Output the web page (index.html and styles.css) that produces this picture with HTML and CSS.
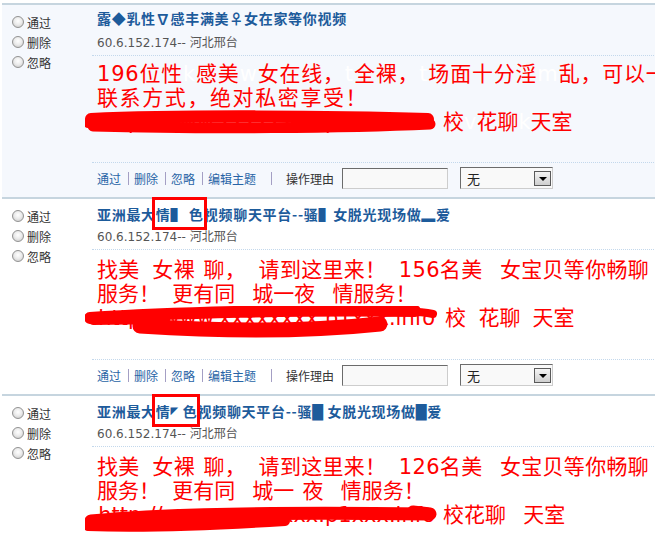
FILE: index.html
```html
<!DOCTYPE html>
<html lang="zh-CN">
<head>
<meta charset="utf-8">
<title>审核帖子</title>
<link rel="stylesheet" href="styles.css">
</head>
<body>
<div class="list">

  <div class="row first">
    <div class="opts">
      <label class="opt"><span class="radio"></span>通过</label>
      <label class="opt"><span class="radio"></span>删除</label>
      <label class="opt"><span class="radio"></span>忽略</label>
    </div>
    <div class="main">
      <div class="title">露◆乳性∇感丰满美♀女在家等你视频</div>
      <div class="ip">60.6.152.174-- 河北邢台</div>
      <div class="msg">
        <p class="ln sp1">196位性<span class="h">k</span>感美<span class="h">w</span>女在线，<span class="h">t</span>全裸，<span class="h">t</span>场面十分淫<span class="h">m</span>乱，可以一</p>
        <p class="ln sp2">联系方式，绝对私密享受！</p>
        <p class="ln"><span class="url"><span class="url-t">http://www.xxxxxxxx.p1xxx.info</span><svg class="scrib" viewBox="0 0 360 32" width="360" height="32"><path d="M6 9 C90 5 250 6 343 9" stroke-width="12"/><path d="M8 16 C120 19 260 18 345 14" stroke-width="11"/><path d="M3 13 L30 12" stroke-width="10"/></svg></span>校<span class="h">v</span>花聊<span class="h">k</span>天室</p>
      </div>
      <div class="acts">
        <a class="lk">通过</a><i class="sep"></i><a class="lk">删除</a><i class="sep"></i><a class="lk">忽略</a><i class="sep"></i><a class="lk">编辑主题</a><i class="sep big"></i><span class="reason">操作理由</span><span class="input"></span><span class="select"><span class="sel-t">无</span><span class="btn"></span></span>
      </div>
    </div>
  </div>

  <div class="row">
    <div class="opts">
      <label class="opt"><span class="radio"></span>通过</label>
      <label class="opt"><span class="radio"></span>删除</label>
      <label class="opt"><span class="radio"></span>忽略</label>
    </div>
    <div class="main">
      <div class="title">亚洲最大<span class="mark">情▌ 色<b class="box"></b></span>视频聊天平台--骚▌女脱光现场做▂爱</div>
      <div class="ip">60.6.152.174-- 河北邢台</div>
      <div class="msg">
        <p class="ln sp3">找美<span class="h">x</span>女裸<span class="h">t</span>聊，<span class="h">k</span>请到这里来！<span class="h">k</span>156名美<span class="h">w</span>女宝贝等你畅聊</p>
        <p class="ln">服务！<span class="h">k</span>更有同<span class="h">w</span>城一夜<span class="h">w</span>情服务！</p>
        <p class="ln"><span class="url u2"><span class="url-t">http://www.xxxxxxxx.p1xxx.info</span><svg class="scrib" viewBox="0 0 360 34" width="360" height="34"><path d="M5 12 C80 7 220 3 330 5" stroke-width="12"/><path d="M55 20 C130 25 220 26 295 18" stroke-width="15"/><path d="M296 7 Q330 4 348 8" stroke-width="8"/><path d="M8 14 L80 13" stroke-width="10"/></svg></span>校<span class="h">v</span>花聊<span class="h">k</span>天室</p>
      </div>
      <div class="acts">
        <a class="lk">通过</a><i class="sep"></i><a class="lk">删除</a><i class="sep"></i><a class="lk">忽略</a><i class="sep"></i><a class="lk">编辑主题</a><i class="sep big"></i><span class="reason">操作理由</span><span class="input"></span><span class="select"><span class="sel-t">无</span><span class="btn"></span></span>
      </div>
    </div>
  </div>

  <div class="row">
    <div class="opts">
      <label class="opt"><span class="radio"></span>通过</label>
      <label class="opt"><span class="radio"></span>删除</label>
      <label class="opt"><span class="radio"></span>忽略</label>
    </div>
    <div class="main">
      <div class="title">亚洲最大<span class="mark">情<span class="tri">◤</span> 色<b class="box"></b></span>视频聊天平台--骚<span class="blk">█</span> 女脱光现场做<span class="blk">█</span>爱</div>
      <div class="ip">60.6.152.174-- 河北邢台</div>
      <div class="msg">
        <p class="ln sp3">找美<span class="h">x</span>女裸<span class="h">t</span>聊，<span class="h">k</span>请到这里来！<span class="h">k</span>126名美<span class="h">w</span>女宝贝等你畅聊</p>
        <p class="ln">服务！<span class="h">k</span>更有同<span class="h">w</span>城一<span class="h">t</span>夜<span class="h">w</span>情服务！</p>
        <p class="ln"><span class="url"><span class="url-t">http://www.xxxxxxxx.p1xxx.info</span><svg class="scrib" viewBox="0 0 360 32" width="360" height="32"><path d="M6 18 C80 11 200 9 342 11" stroke-width="13"/><path d="M3 23 C60 25 120 23 200 18" stroke-width="10"/><path d="M328 9 L345 11" stroke-width="13"/></svg></span>校花聊<span class="h">w</span>天室</p>
      </div>
    </div>
  </div>

</div>
</body>
</html>
```

FILE: styles.css
```css
html, body {
  margin: 0;
  padding: 0;
  overflow: hidden;
  background: #fff;
}

body {
  font-family: "DejaVu Sans", "Noto Sans CJK SC", sans-serif;
  width: 655px;
  height: 549px;
}

.list {
  margin: 3px 0 0 2px;
  width: 780px;
  border-top: 2px solid #c6d5df;
}

.row {
  display: flex;
  border-bottom: 2px solid #c6d5df;
}

.row.first {
  background: #f5f8fd;
}

.opts {
  flex: none;
  width: 90px;
  box-sizing: border-box;
  padding: 7px 0 0 10px;
}

.opt {
  display: flex;
  align-items: center;
  height: 20px;
  font-family: "Noto Sans CJK SC", sans-serif;
  font-size: 12px;
  color: #333;
}

.radio {
  flex: none;
  width: 12px;
  height: 12px;
  margin-right: 3px;
  box-sizing: border-box;
  border-radius: 50%;
  border: 1px solid #929292;
  background: radial-gradient(circle at 50% 40%, #ffffff 0, #ececec 45%, #c4c4c4 100%);
}

.main {
  flex: 1;
  min-width: 0;
}

.title {
  padding: 5px 0 0 5px;
  height: 20px;
  line-height: 20px;
  font-family: "Noto Sans CJK SC", sans-serif;
  font-size: 14px;
  letter-spacing: 0.7px;
  font-weight: bold;
  color: #1d5b9b;
  white-space: nowrap;
}

.first .title {
  padding-top: 3px;
}

.tri {
  font-family: "DejaVu Sans", sans-serif;
  font-size: 10px;
  vertical-align: 3px;
}

.blk {
  font-family: "DejaVu Sans", sans-serif;
}

.mark {
  position: relative;
}

.box {
  position: absolute;
  left: -4px;
  right: -3px;
  top: -7px;
  bottom: -6px;
  border: 3px solid #f00;
}

.ip {
  margin-top: 3px;
  padding: 0 0 2px 5px;
  line-height: 20px;
  font-size: 12px;
  color: #555;
  border-bottom: 1px dotted #c3d8ec;
}

.first .ip {
  margin-top: 5px;
}

.msg {
  padding: 8px 0 29px 5px;
  border-bottom: 1px dotted #c3d8ec;
  font-size: 21px;
  line-height: 24px;
  color: #f00;
}

.first .msg {
  padding-top: 6px;
  padding-bottom: 28px;
}

.ln {
  margin: 0;
  height: 24px;
  white-space: nowrap;
}

.sp1 {
  letter-spacing: 0.8px;
}

.sp2 {
  letter-spacing: 1.6px;
}

.sp3 {
  letter-spacing: 0.3px;
}

.h {
  color: #fff;
  font-style: normal;
}

.url {
  position: relative;
  display: inline-block;
  vertical-align: top;
  width: 338px;
  height: 24px;
  margin-right: 8px;
}

.url.u2 {
  margin-right: 10px;
}

.url-t {
  display: block;
  overflow: hidden;
  white-space: nowrap;
  text-align: right;
  height: 24px;
}

.scrib {
  position: absolute;
  left: -12px;
  top: 0;
  fill: none;
  stroke: #f00;
  stroke-linecap: round;
  stroke-linejoin: round;
}

.acts {
  display: flex;
  align-items: center;
  height: 22px;
  padding: 4px 0 8px 5px;
  font-family: "Noto Sans CJK SC", sans-serif;
  font-size: 12px;
}

.lk {
  color: #2864a6;
  cursor: pointer;
}

.sep {
  width: 1px;
  height: 13px;
  margin: 0 5px 0 7px;
  background: #a49fc4;
}

.sep.big {
  margin: 0 14px 0 15px;
}

.reason {
  color: #333;
}

.input {
  width: 106px;
  height: 21px;
  margin-left: 8px;
  box-sizing: border-box;
  border: 1px solid;
  border-color: #6b6b6b #cdcdcd #cdcdcd #6b6b6b;
  background: #f9f9f9;
}

.select {
  display: flex;
  align-items: center;
  justify-content: space-between;
  width: 93px;
  height: 22px;
  margin-left: 12px;
  box-sizing: border-box;
  padding: 0 1px 0 6px;
  border: 1px solid;
  border-color: #6b6b6b #cdcdcd #cdcdcd #6b6b6b;
  background: #f9f9f9;
  font-size: 13px;
  color: #222;
}

.btn {
  position: relative;
  width: 17px;
  height: 15px;
  box-sizing: border-box;
  border: 1px solid #5a5a5a;
  background: linear-gradient(#f4f4f4, #cfcfcf);
}

.btn::after {
  content: "";
  position: absolute;
  left: 4px;
  top: 5px;
  border-left: 4px solid transparent;
  border-right: 4px solid transparent;
  border-top: 4px solid #000;
}
```
